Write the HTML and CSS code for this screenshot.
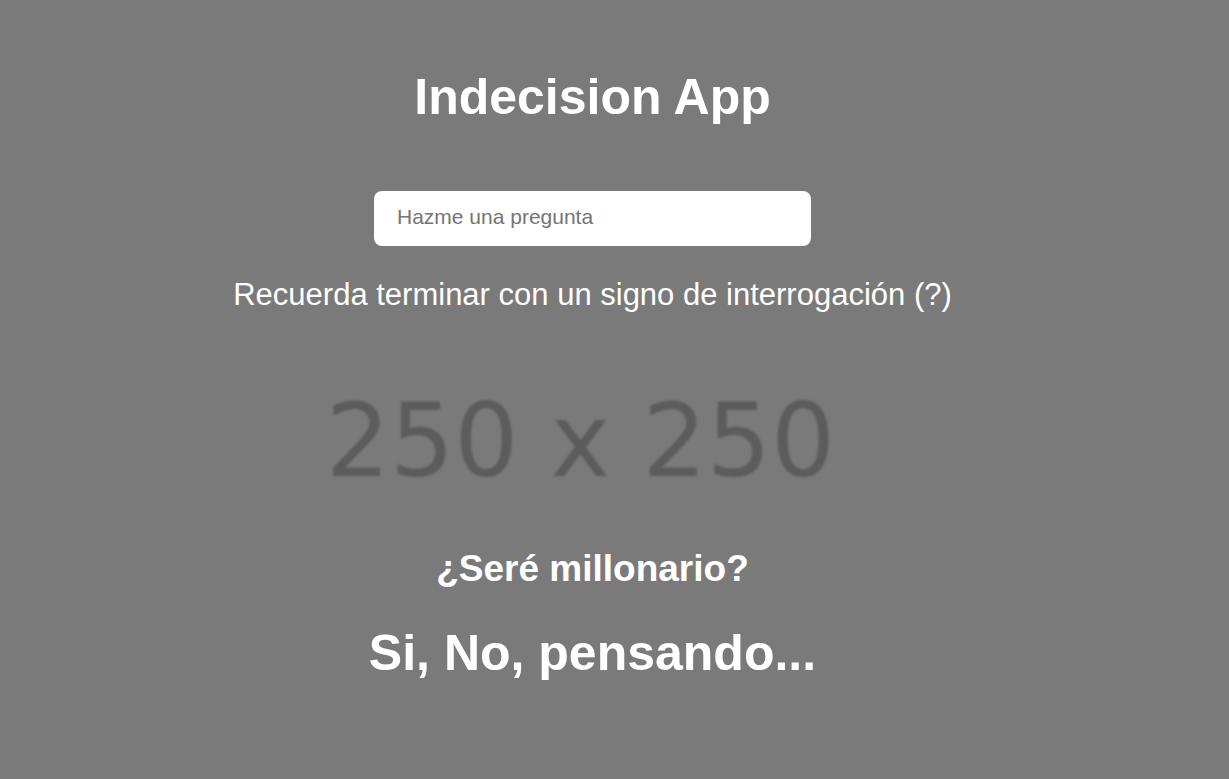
FILE: index.html
```html
<!DOCTYPE html>
<html lang="es">
<head>
<meta charset="utf-8">
<meta name="viewport" content="width=device-width, initial-scale=1">
<title>Indecision App</title>
<link rel="stylesheet" href="styles.css">
</head>
<body>
<main class="app">
  <h1 class="title">Indecision App</h1>
  <input class="question-input" type="text" placeholder="Hazme una pregunta" aria-label="Hazme una pregunta">
  <p class="hint">Recuerda terminar con un signo de interrogación (?)</p>
  <div class="placeholder">250 x 250</div>
  <h2 class="question">¿Seré millonario?</h2>
  <p class="answer">Si, No, pensando...</p>
</main>
</body>
</html>
```
FILE: styles.css
```css
* {
  box-sizing: border-box;
}

body {
  margin: 0;
  min-height: 100vh;
  background: #7a7a7a;
  color: #fff;
  font-family: "Liberation Sans", Arial, sans-serif;
}

.app {
  display: flex;
  flex-direction: column;
  align-items: center;
  padding: 67px 44px 67px 0;
  text-align: center;
}

.title,
.answer {
  margin: 0;
  font-size: 50px;
  font-weight: 700;
  line-height: 60px;
}

.question-input {
  width: 437px;
  max-width: 90%;
  margin-top: 64px;
  padding: 13px 23px 17px;
  border: 0;
  border-radius: 8px;
  background: #fff;
  font-family: inherit;
  font-size: 21px;
  line-height: 25px;
}

.question-input::placeholder {
  color: #757575;
}

.hint {
  margin: 30px 0 0;
  font-size: 31px;
  line-height: 38px;
}

.placeholder {
  margin-top: 67px;
  padding-right: 24px;
  color: #5c5c5c;
  font-family: "DejaVu Sans", sans-serif;
  font-size: 101px;
  line-height: 120px;
  white-space: nowrap;
  filter: blur(1px);
}

.question {
  margin: 45px 0 0;
  font-size: 37px;
  line-height: 46px;
}

.answer {
  margin-top: 31px;
}
```
